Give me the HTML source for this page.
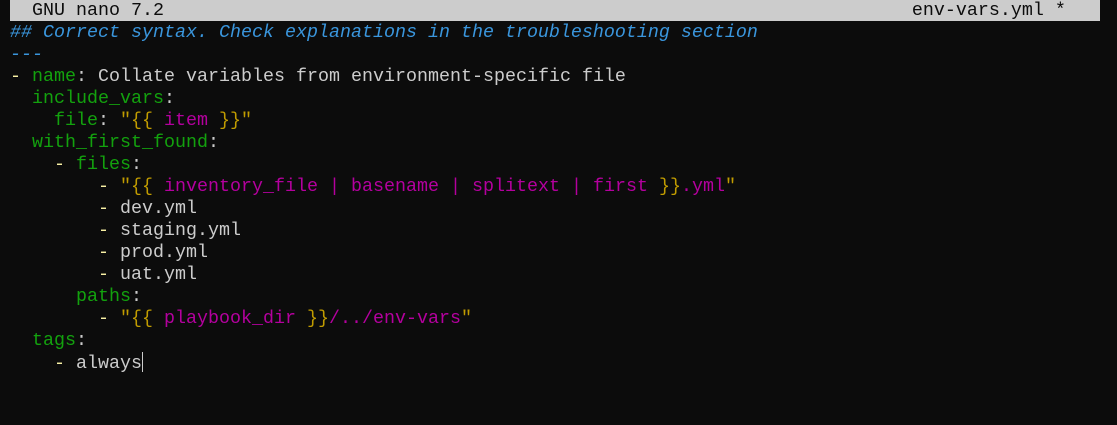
<!DOCTYPE html>
<html><head><style>
html,body{margin:0;padding:0;background:#0c0c0c;width:1117px;height:425px;overflow:hidden}
pre{margin:0;position:absolute;left:10px;top:0;font-family:"Liberation Mono",monospace;font-size:18.33px;line-height:22px;color:#cccccc}
.bar{position:absolute;left:10px;top:0;width:1090px;height:21px;background:#cccccc}
.t{color:#0c0c0c}
.c{color:#3a96dd;font-style:italic}
.g{color:#13a10e}
.y{color:#f9f1a5}
.b{color:#c19c00}
.m{color:#b4009e}
.cur{display:inline-block;width:1px;height:20px;background:#ccc;vertical-align:-4px}
</style></head><body>
<div class="bar"></div>
<pre style="top:0px"><span class="t">  GNU nano 7.2                                                                    env-vars.yml *</span></pre>
<pre style="top:22px"><span class="c">## Correct syntax. Check explanations in the troubleshooting section</span>
<span class="c">---</span>
<span class="y">-</span> <span class="g">name</span>: Collate variables from environment-specific file
  <span class="g">include_vars</span>:
    <span class="g">file</span>: <span class="b">"{{</span> <span class="m">item</span> <span class="b">}}</span><span class="b">"</span>
  <span class="g">with_first_found</span>:
    <span class="y">-</span> <span class="g">files</span>:
        <span class="y">-</span> <span class="b">"{{</span> <span class="m">inventory_file | basename | splitext | first</span> <span class="b">}}</span><span class="m">.yml</span><span class="b">"</span>
        <span class="y">-</span> dev.yml
        <span class="y">-</span> staging.yml
        <span class="y">-</span> prod.yml
        <span class="y">-</span> uat.yml
      <span class="g">paths</span>:
        <span class="y">-</span> <span class="b">"{{</span> <span class="m">playbook_dir</span> <span class="b">}}</span><span class="m">/../env-vars</span><span class="b">"</span>
  <span class="g">tags</span>:
    <span class="y">-</span> always<span class="cur"></span></pre>
</body></html>
